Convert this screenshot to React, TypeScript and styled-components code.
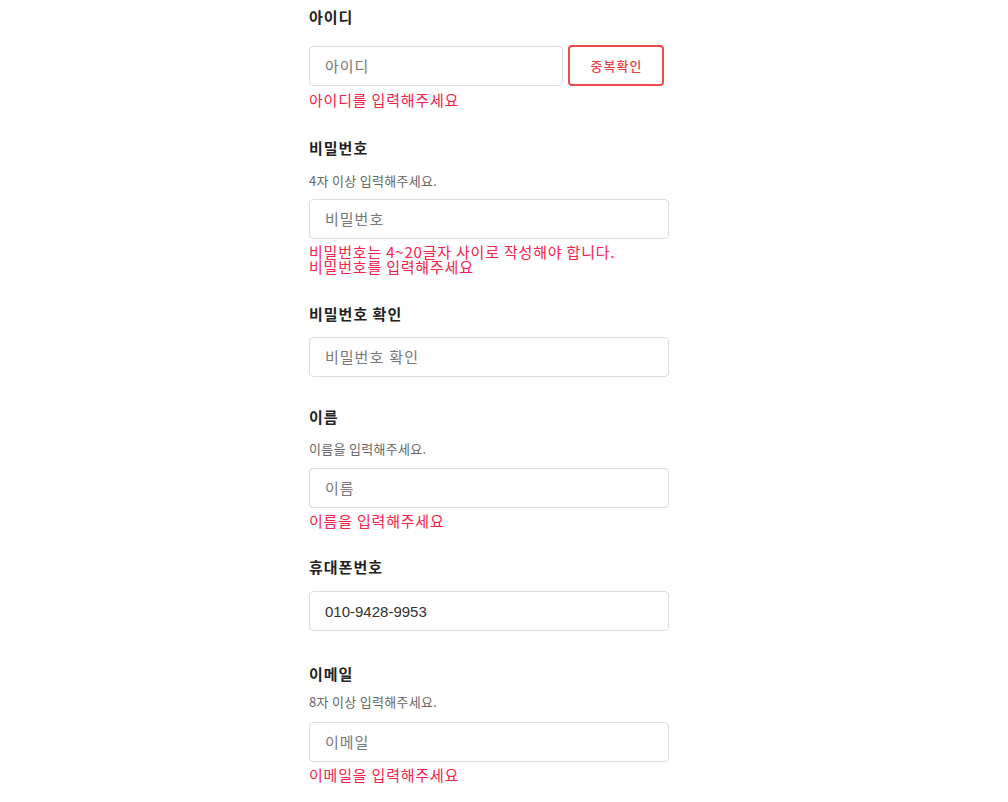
import React from "react";
import styled, { createGlobalStyle } from "styled-components";

const Global = createGlobalStyle`
  html, body { margin: 0; padding: 0; background: #fff; }
  body { font-family: "Noto Sans CJK KR", "Noto Sans", sans-serif; color: #222; }
  * { box-sizing: border-box; }
`;

const Page = styled.div`
  display: flex;
  justify-content: center;
  padding-top: 7px;
  padding-bottom: 20px;
`;

const Form = styled.form`
  width: 360px;
  margin-right: 30px;
  display: flex;
  flex-direction: column;
`;

const Field = styled.div<{ $mt: number }>`
  display: flex;
  flex-direction: column;
  margin-top: ${(p) => p.$mt}px;
`;

const Label = styled.label`
  font-size: 15px;
  font-weight: 700;
  line-height: 20px;
  letter-spacing: 1px;
  color: #222;
`;

const Hint = styled.p<{ $mt: number }>`
  margin: ${(p) => p.$mt}px 0 0;
  font-size: 13px;
  line-height: 16px;
  letter-spacing: 0.3px;
  color: #666;
`;

const Row = styled.div<{ $mt: number }>`
  display: flex;
  align-items: flex-end;
  gap: 5px;
  margin-top: ${(p) => p.$mt}px;
`;

const Input = styled.input<{ $w?: number }>`
  width: ${(p) => (p.$w ? `${p.$w}px` : "100%")};
  height: 40px;
  padding: 0 15px;
  border: 1px solid #dcdcdc;
  border-radius: 4px;
  font-family: "Liberation Sans", "Noto Sans CJK KR", sans-serif;
  font-size: 15px;
  color: #333;
  outline: none;
  background: #fff;
  &::placeholder {
    color: #777;
    letter-spacing: 1px;
  }
`;

const CheckButton = styled.button`
  width: 96px;
  height: 41px;
  padding: 0 0 0 1px;
  border: 2px solid #eb4a4a;
  border-radius: 4px;
  background: #fff;
  color: #e8414a;
  font-family: "Noto Sans CJK KR", sans-serif;
  font-size: 13px;
  font-weight: 500;
  letter-spacing: 1px;
  cursor: pointer;
`;

const Errors = styled.div<{ $mt: number }>`
  margin-top: ${(p) => p.$mt}px;
  font-size: 15px;
  line-height: 15px;
  letter-spacing: 0.8px;
  color: #f5224a;
`;

export default function App() {
  return (
    <>
      <Global />
      <Page>
        <Form onSubmit={(e) => e.preventDefault()}>
          <Field $mt={0}>
            <Label>아이디</Label>
            <Row $mt={18}>
              <Input $w={254} placeholder="아이디" />
              <CheckButton type="button">중복확인</CheckButton>
            </Row>
            <Errors $mt={6}>아이디를 입력해주세요</Errors>
          </Field>

          <Field $mt={31}>
            <Label>비밀번호</Label>
            <Hint $mt={15}>4자 이상 입력해주세요.</Hint>
            <Row $mt={10}>
              <Input type="password" placeholder="비밀번호" />
            </Row>
            <Errors $mt={5}>
              비밀번호는 4~20글자 사이로 작성해야 합니다.
              <br />
              비밀번호를 입력해주세요
            </Errors>
          </Field>

          <Field $mt={30}>
            <Label>비밀번호 확인</Label>
            <Row $mt={13}>
              <Input type="password" placeholder="비밀번호 확인" />
            </Row>
          </Field>

          <Field $mt={30}>
            <Label>이름</Label>
            <Hint $mt={14}>이름을 입력해주세요.</Hint>
            <Row $mt={11}>
              <Input placeholder="이름" />
            </Row>
            <Errors $mt={5}>이름을 입력해주세요</Errors>
          </Field>

          <Field $mt={29}>
            <Label>휴대폰번호</Label>
            <Row $mt={14}>
              <Input defaultValue="010-9428-9953" />
            </Row>
          </Field>

          <Field $mt={33}>
            <Label>이메일</Label>
            <Hint $mt={10}>8자 이상 입력해주세요.</Hint>
            <Row $mt={12}>
              <Input placeholder="이메일" />
            </Row>
            <Errors $mt={5}>이메일을 입력해주세요</Errors>
          </Field>
        </Form>
      </Page>
    </>
  );
}
